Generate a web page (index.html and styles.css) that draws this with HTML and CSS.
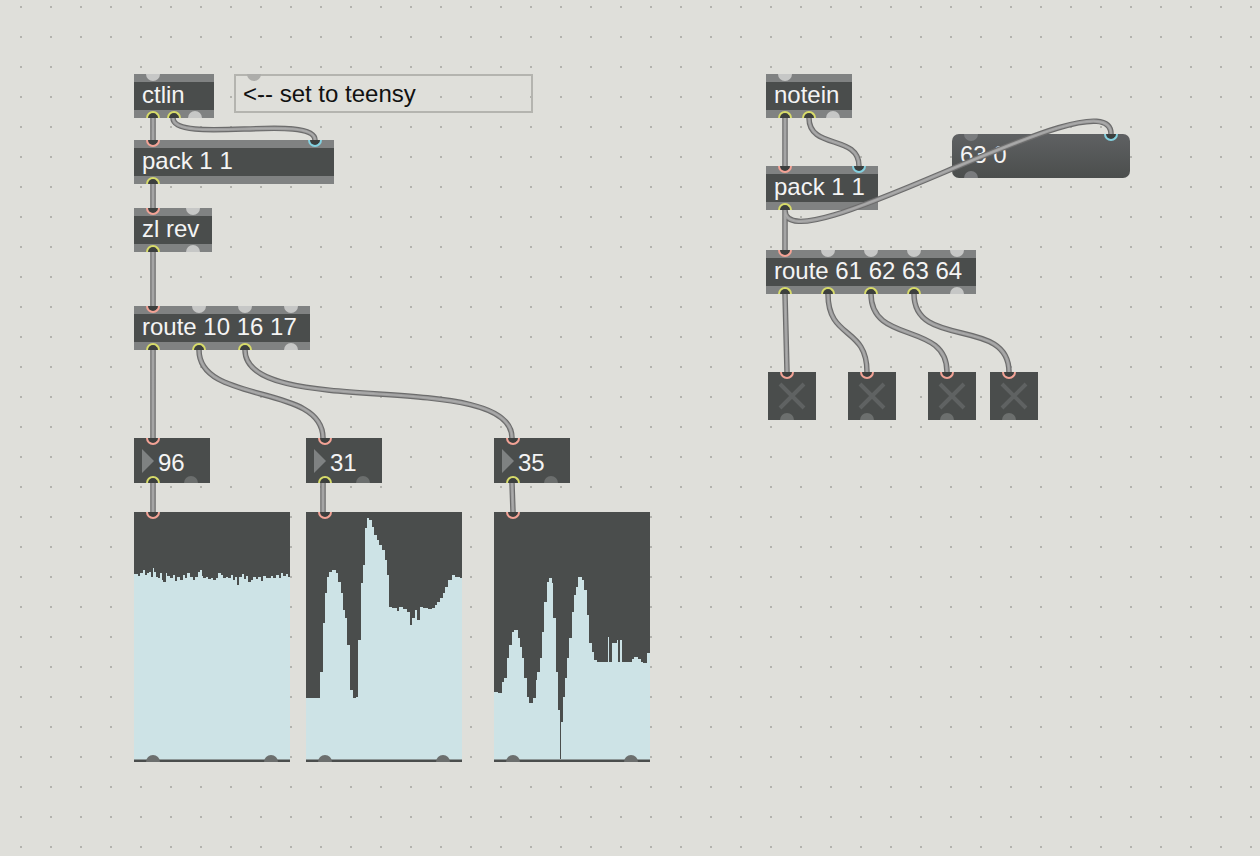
FILE: index.html
```html
<!DOCTYPE html>
<html>
<head>
<meta charset="utf-8">
<link rel="stylesheet" href="styles.css">
</head>
<body>
<div class="patcher">

  <div class="obj o-ctlin">
    <div class="ports in"><span class="p free"></span></div>
    <div class="label">ctlin</div>
    <div class="ports out"><span class="p yel"></span><span class="p yel"></span><span class="p free"></span></div>
  </div>

  <div class="comment">&lt;-- set to teensy<span class="cport"></span></div>

  <div class="obj o-packL">
    <div class="ports in"><span class="p pink"></span><span class="p cyan"></span></div>
    <div class="label">pack 1 1</div>
    <div class="ports out"><span class="p yel"></span></div>
  </div>

  <div class="obj o-zl">
    <div class="ports in"><span class="p pink"></span><span class="p free"></span></div>
    <div class="label">zl rev</div>
    <div class="ports out"><span class="p yel"></span><span class="p free"></span></div>
  </div>

  <div class="obj o-routeL">
    <div class="ports in"><span class="p pink"></span><span class="p free"></span><span class="p free"></span><span class="p free"></span></div>
    <div class="label">route 10 16 17</div>
    <div class="ports out"><span class="p yel"></span><span class="p yel"></span><span class="p yel"></span><span class="p free"></span></div>
  </div>

  <div class="obj num n1">
    <div class="ports in"><span class="p pink"></span></div>
    <div class="label"><span class="tri"></span>96</div>
    <div class="ports out"><span class="p yel"></span><span class="p free"></span></div>
  </div>
  <div class="obj num n2">
    <div class="ports in"><span class="p pink"></span></div>
    <div class="label"><span class="tri"></span>31</div>
    <div class="ports out"><span class="p yel"></span><span class="p free"></span></div>
  </div>
  <div class="obj num n3">
    <div class="ports in"><span class="p pink"></span></div>
    <div class="label"><span class="tri"></span>35</div>
    <div class="ports out"><span class="p yel"></span><span class="p free"></span></div>
  </div>

  <div class="ms m1">
    <svg class="fill" width="156" height="250" viewBox="0 0 156 250">
      <rect x="0" y="247" width="156" height="1" fill="#8d9797"/>
      <polygon points="0,247 0,62 4,62 4,64 6,64 6,61 9,61 9,58 11,58 11,63 13,63 13,61 15,61 15,60 17,60 17,65 19,65 19,56 20,56 20,60 22,60 22,65 24,65 24,66 26,66 26,61 28,61 28,68 29,68 29,70 32,70 32,61 33,61 33,64 36,64 36,66 39,66 39,63 41,63 41,69 43,69 43,65 46,65 46,68 49,68 49,63 51,63 51,66 53,66 53,61 56,61 56,65 59,65 59,68 61,68 61,65 64,65 64,60 66,60 66,58 68,58 68,64 69,64 69,66 72,66 72,65 74,65 74,67 77,67 77,66 79,66 79,68 82,68 82,66 84,66 84,61 87,61 87,63 89,63 89,66 92,66 92,65 94,65 94,66 97,66 97,63 99,63 99,68 101,68 101,65 103,65 103,73 105,73 105,65 108,65 108,62 110,62 110,67 112,67 112,64 114,64 114,70 117,70 117,68 119,68 119,65 122,65 122,67 124,67 124,65 127,65 127,69 129,69 129,64 132,64 132,66 137,66 137,64 139,64 139,66 142,66 142,63 145,63 145,66 147,66 147,61 149,61 149,64 152,64 152,62 154,62 154,65 156,65 156,247"/>
    </svg>
    <div class="ports in"><span class="p pink"></span></div>
    <div class="ports out"><span class="p free"></span><span class="p free"></span></div>
  </div>

  <div class="ms m2">
    <svg class="fill" width="156" height="250" viewBox="0 0 156 250">
      <rect x="0" y="247" width="156" height="1" fill="#8d9797"/>
      <polygon points="0,247 0,186 14,186 14,160 17,160 17,111 19,111 19,81 21,81 21,65 23,65 23,60 26,60 26,58 30,58 30,61 32,61 32,70 35,70 35,81 37,81 37,98 39,98 39,106 41,106 41,133 44,133 44,178 47,178 47,186 50,186 50,185 52,185 52,128 55,128 55,71 57,71 57,53 59,53 59,16 61,16 61,6 63,6 63,8 66,8 66,15 68,15 68,23 71,23 71,28 73,28 73,33 76,33 76,38 79,38 79,48 81,48 81,63 83,63 83,95 86,95 86,96 91,96 91,99 93,99 93,95 97,95 97,97 101,97 101,100 104,100 104,113 106,113 106,106 109,106 109,98 111,98 111,108 114,108 114,95 117,95 117,96 122,96 122,97 126,97 126,96 129,96 129,93 131,93 131,90 134,90 134,86 137,86 137,81 139,81 139,75 142,75 142,68 146,68 146,63 149,63 149,65 154,65 154,66 156,66 156,247"/>
    </svg>
    <div class="ports in"><span class="p pink"></span></div>
    <div class="ports out"><span class="p free"></span><span class="p free"></span></div>
  </div>

  <div class="ms m3">
    <svg class="fill" width="156" height="250" viewBox="0 0 156 250">
      <rect x="0" y="247" width="156" height="1" fill="#8d9797"/>
      <polygon points="0,247 0,180 4,180 4,181 8,181 8,170 10,170 10,166 13,166 13,146 15,146 15,133 18,133 18,120 20,120 20,118 24,118 24,126 26,126 26,135 28,135 28,146 30,146 30,166 33,166 33,185 35,185 35,191 39,191 39,186 42,186 42,168 43,168 43,160 46,160 46,146 48,146 48,120 50,120 50,90 53,90 53,70 55,70 55,66 58,66 58,71 59,71 59,106 62,106 62,160 64,160 64,198 66,198 66,247 67,247 67,210 69,210 69,185 71,185 71,166 73,166 73,146 75,146 75,126 78,126 78,100 80,100 80,83 82,83 82,75 84,75 84,65 88,65 88,68 90,68 90,78 93,78 93,103 95,103 95,131 98,131 98,140 100,140 100,148 103,148 103,150 114,150 114,125 115,125 115,150 118,150 118,131 123,131 123,128 124,128 124,150 126,150 126,128 128,128 128,150 138,150 138,147 140,147 140,145 144,145 144,147 147,147 147,150 149,150 149,151 153,151 153,141 156,141 156,247"/>
    </svg>
    <div class="ports in"><span class="p pink"></span></div>
    <div class="ports out"><span class="p free"></span><span class="p free"></span></div>
  </div>

  <div class="obj o-notein">
    <div class="ports in"><span class="p free"></span></div>
    <div class="label">notein</div>
    <div class="ports out"><span class="p yel"></span><span class="p yel"></span><span class="p free"></span></div>
  </div>

  <div class="obj o-packR">
    <div class="ports in"><span class="p pink"></span><span class="p cyan"></span></div>
    <div class="label">pack 1 1</div>
    <div class="ports out"><span class="p yel"></span></div>
  </div>

  <div class="obj msg">
    <div class="ports in"><span class="p free"></span><span class="p cyan"></span></div>
    <div class="label">63 0</div>
    <div class="ports out"><span class="p free"></span></div>
  </div>

  <div class="obj o-routeR">
    <div class="ports in"><span class="p pink"></span><span class="p free"></span><span class="p free"></span><span class="p free"></span><span class="p free"></span></div>
    <div class="label">route 61 62 63 64</div>
    <div class="ports out"><span class="p yel"></span><span class="p yel"></span><span class="p yel"></span><span class="p yel"></span><span class="p free"></span></div>
  </div>

  <div class="tog t1">
    <div class="ports in"><span class="p pink"></span></div>
    <svg class="x" width="48" height="32" viewBox="0 0 48 32"><path d="M12 4 L36 28 M36 4 L12 28"/></svg>
    <div class="ports out"><span class="p free"></span></div>
  </div>
  <div class="tog t2">
    <div class="ports in"><span class="p pink"></span></div>
    <svg class="x" width="48" height="32" viewBox="0 0 48 32"><path d="M12 4 L36 28 M36 4 L12 28"/></svg>
    <div class="ports out"><span class="p free"></span></div>
  </div>
  <div class="tog t3">
    <div class="ports in"><span class="p pink"></span></div>
    <svg class="x" width="48" height="32" viewBox="0 0 48 32"><path d="M12 4 L36 28 M36 4 L12 28"/></svg>
    <div class="ports out"><span class="p free"></span></div>
  </div>
  <div class="tog t4">
    <div class="ports in"><span class="p pink"></span></div>
    <svg class="x" width="48" height="32" viewBox="0 0 48 32"><path d="M12 4 L36 28 M36 4 L12 28"/></svg>
    <div class="ports out"><span class="p free"></span></div>
  </div>

  <svg class="cords" width="1260" height="856" viewBox="0 0 1260 856">
    <defs>
      <path id="allcords" d="M153,118 L153,140
        M173,118 C173,145 315,113 315,140
        M153,184 L153,208
        M153,252 L153,306
        M153,350 L153,438
        M199,350 C199,405 323,383 323,438
        M245,350 C245,420 512,368 512,438
        M153,483 L153,512
        M323,483 L323,512
        M512,483 L513,512
        M785,118 L785,166
        M809,118 C809,150 859,134 859,166
        M785,210 L785,250
        M785,210 C785,270 1111,70 1111,134
        M785,294 L787,372
        M828,294 C828,340 867,326 867,372
        M871,294 C871,345 947,321 947,372
        M914,294 C914,350 1009,316 1009,372"/>
    </defs>
    <use href="#allcords" class="cord-out"/>
    <use href="#allcords" class="cord-in"/>
    <use href="#allcords" class="cord-hi"/>
  </svg>

</div>
</body>
</html>
```

FILE: styles.css
```css
html, body {
  margin: 0;
  padding: 0;
  background: #dfdfda;
}

.patcher {
  position: relative;
  width: 1260px;
  height: 856px;
  overflow: hidden;
  background-color: #dfdfda;
  background-image:
    linear-gradient(to right, #dfdfda 20px, transparent 20px, transparent 22px, #dfdfda 22px),
    linear-gradient(to bottom, #dfdfda 6px, #b3b3ae 6px, #b3b3ae 8px, #dfdfda 8px);
  background-size: 30px 30px;
  font-family: "Liberation Sans", Arial, sans-serif;
}

/* ---------- generic object box ---------- */
.obj {
  position: absolute;
  display: flex;
  flex-direction: column;
  height: 44px;
  background: #4a4d4c;
}

.ports {
  height: 8px;
  display: flex;
  justify-content: space-between;
  padding: 0 12px;
  background: #808282;
  flex: none;
}
.ports.in { align-items: flex-start; }
.ports.out { align-items: flex-end; }

.p {
  display: block;
  flex: none;
  width: 14px;
  height: 7px;
  box-sizing: border-box;
}
.in .p { border-radius: 0 0 7px 7px; }
.out .p { border-radius: 7px 7px 0 0; }

.p.free { background: #c6c7c6; }
.p.pink, .p.yel, .p.cyan {
  background: #3c3f3e;
  border: 2px solid;
}
.in .p.pink, .in .p.cyan { border-top: none; }
.out .p.yel { border-bottom: none; }
.p.pink { border-color: #f3a396; }
.p.yel { border-color: #d8dc6a; }
.p.cyan { border-color: #84d2e1; }

.label {
  height: 28px;
  padding-left: 8px;
  font-size: 24px;
  line-height: 26px;
  color: #f4f4f4;
  white-space: nowrap;
  flex: none;
}

.o-ctlin  { left: 134px; top: 74px;  width: 80px; }
.o-packL  { left: 134px; top: 140px; width: 200px; }
.o-zl     { left: 134px; top: 208px; width: 78px; }
.o-routeL { left: 134px; top: 306px; width: 176px; }
.o-notein { left: 766px; top: 74px;  width: 86px; }
.o-packR  { left: 766px; top: 166px; width: 112px; }
.o-routeR { left: 766px; top: 250px; width: 210px; }

/* ---------- comment ---------- */
.comment {
  position: absolute;
  left: 234px;
  top: 74px;
  width: 299px;
  height: 39px;
  box-sizing: border-box;
  border: 2px solid #b4b4af;
  padding-left: 7px;
  font-size: 24px;
  line-height: 35px;
  color: #111111;
  white-space: nowrap;
}
.cport {
  position: absolute;
  left: 11px;
  top: -2px;
  width: 14px;
  height: 7px;
  border-radius: 0 0 7px 7px;
  background: #adadaa;
}

/* ---------- number boxes ---------- */
.num {
  height: 45px;
  width: 76px;
  top: 438px;
}
.num .ports { background: transparent; }
.num .p.free { background: #6b6e6d; }
.num .label {
  height: 29px;
  box-sizing: border-box;
  padding-top: 2px;
  line-height: 29px;
  display: flex;
  align-items: flex-start;
}
.tri {
  display: block;
  width: 0;
  height: 0;
  margin-top: 1px;
  margin-right: 4px;
  border-left: 12px solid #7f8282;
  border-top: 12px solid transparent;
  border-bottom: 12px solid transparent;
}
.n1 { left: 134px; }
.n2 { left: 306px; }
.n3 { left: 494px; }

/* ---------- multisliders ---------- */
.ms {
  position: absolute;
  top: 512px;
  width: 156px;
  height: 250px;
  background: #4a4d4c;
}
.ms .fill { display: block; }
.ms polygon { fill: #cde3e6; }
.ms .ports {
  position: absolute;
  left: 0;
  right: 0;
  background: transparent;
}
.ms .ports.in { top: 0; }
.ms .ports.out { bottom: 0; }
.ms .p.free { background: #6c6f6e; }
.m1 { left: 134px; }
.m2 { left: 306px; }
.m3 { left: 494px; }

/* ---------- message box ---------- */
.msg {
  left: 952px;
  top: 134px;
  width: 178px;
  border-radius: 7px;
  background: linear-gradient(to bottom, #5f6163, #4b4e4d);
}
.msg .ports { background: transparent; }
.msg .p.free { background: #7a7c7e; }

/* ---------- toggles ---------- */
.tog {
  position: absolute;
  top: 372px;
  width: 48px;
  height: 48px;
  display: flex;
  flex-direction: column;
  background: #4a4d4c;
}
.tog .ports { background: transparent; }
.tog .p.free { background: #6c6f6e; }
.tog .x { display: block; flex: none; }
.tog .x path {
  stroke: #5f6262;
  stroke-width: 4;
  fill: none;
}
.t1 { left: 768px; }
.t2 { left: 848px; }
.t3 { left: 928px; }
.t4 { left: 990px; }

/* ---------- patch cords ---------- */
.cords {
  position: absolute;
  left: 0;
  top: 0;
  pointer-events: none;
}
.cords use { fill: none; stroke-linecap: butt; }
.cord-out { stroke: #6c6c6c; stroke-width: 5.5; }
.cord-in  { stroke: #9d9d9d; stroke-width: 3.2; }
.cord-hi  { stroke: #ababab; stroke-width: 1.2; }
```
